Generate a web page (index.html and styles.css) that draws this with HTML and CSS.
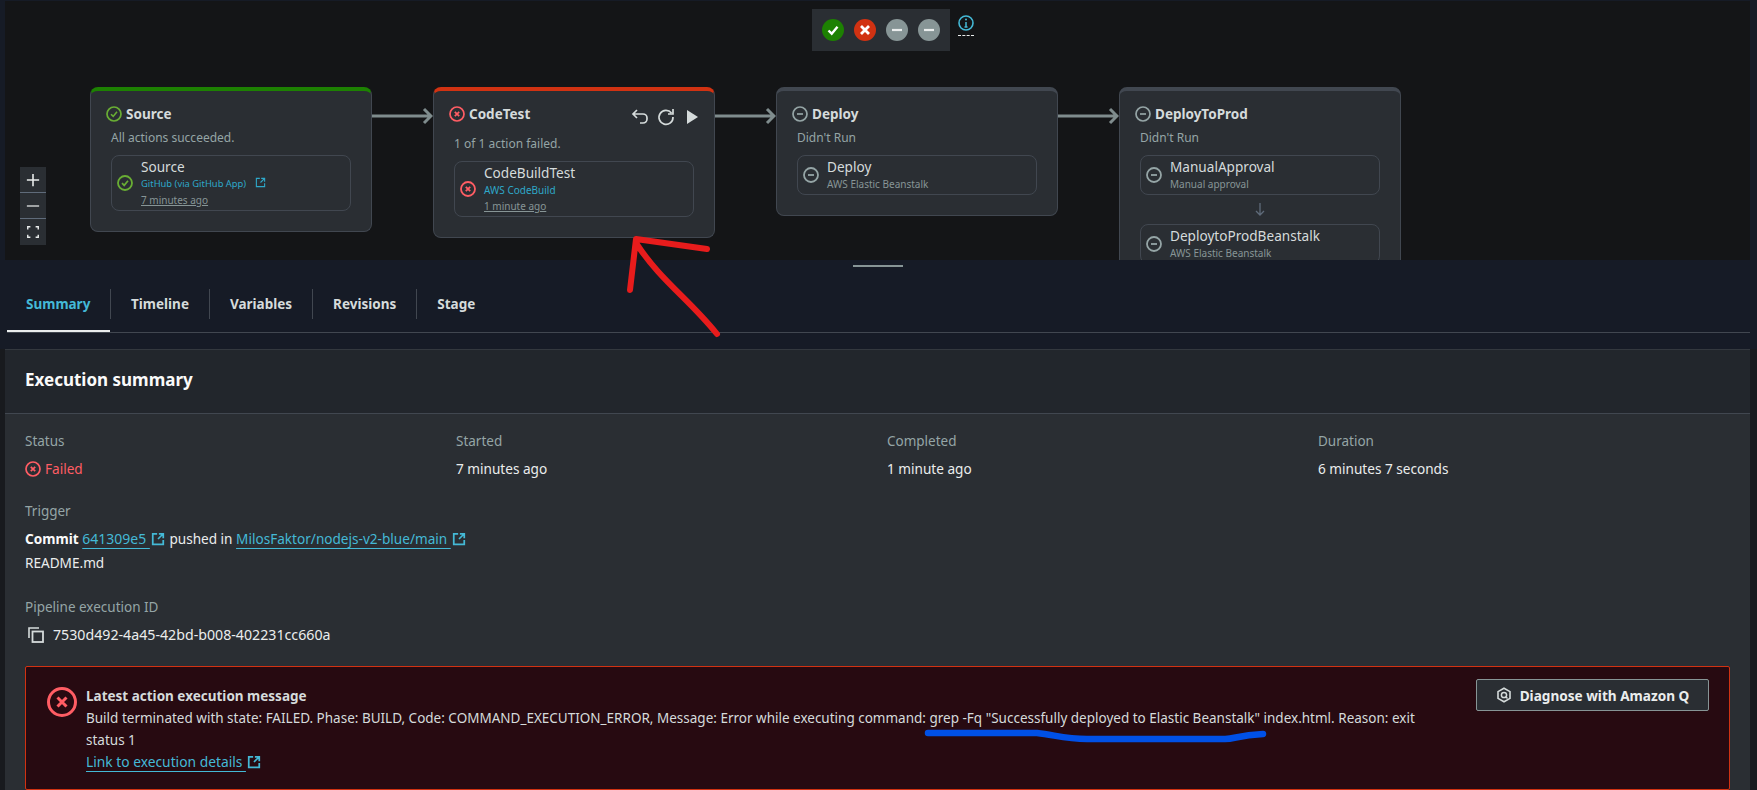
FILE: index.html
```html
<!DOCTYPE html>
<html lang="en">
<head>
  <meta charset="UTF-8" />
  <title>Pipeline execution</title>
  <link rel="stylesheet" href="styles.css">
</head>
<body>
  <div class="diagram">
    <div class="legend">
      <div class="legend-box">
        <svg class="dot" viewBox="0 0 22 22"><circle cx="11" cy="11" r="11" fill="#1d8102"/><path d="M6.5 11.5l3.2 3.2 5.8-7" fill="none" stroke="#fff" stroke-width="2.4"/></svg>
        <svg class="dot" viewBox="0 0 22 22"><circle cx="11" cy="11" r="11" fill="#d13212"/><path d="M7 7l8 8M15 7l-8 8" fill="none" stroke="#fff" stroke-width="2.8"/></svg>
        <svg class="dot" viewBox="0 0 22 22"><circle cx="11" cy="11" r="11" fill="#879596"/><path d="M6 11h10" stroke="#eaeded" stroke-width="2.2"/></svg>
        <svg class="dot" viewBox="0 0 22 22"><circle cx="11" cy="11" r="11" fill="#879596"/><path d="M6 11h10" stroke="#eaeded" stroke-width="2.2"/></svg>
      </div>
      <div class="legend-info">
        <svg viewBox="0 0 16 16" width="16" height="16"><circle cx="8" cy="8" r="7" fill="none" stroke="#44b9d6" stroke-width="1.6"/><path d="M8 7v5M6.5 12h3" stroke="#44b9d6" stroke-width="1.5" fill="none"/><circle cx="8" cy="4.6" r="1" fill="#44b9d6"/></svg>
      </div>
    </div>

    <div class="zoom-ctl">
      <div class="zoom-btn"><svg viewBox="0 0 16 16" width="14" height="14"><path d="M8 1v14M1 8h14" stroke="#eaeded" stroke-width="1.8"/></svg></div>
      <div class="zoom-btn"><svg viewBox="0 0 16 16" width="14" height="14"><path d="M1 8h14" stroke="#eaeded" stroke-width="1.4"/></svg></div>
      <div class="zoom-btn"><svg viewBox="0 0 16 16" width="14" height="14"><path d="M2 5V2h3M11 2h3v3M14 11v3h-3M5 14H2v-3" fill="none" stroke="#eaeded" stroke-width="1.6"/></svg></div>
    </div>

    <div class="stages">
      <div class="stage stage-ok">
        <div class="stage-head">
          <svg class="ic" viewBox="0 0 16 16"><circle cx="8" cy="8" r="7" fill="none" stroke="#69ae34" stroke-width="1.7"/><path d="M5 8.2l2.2 2.2 3.8-4.6" fill="none" stroke="#69ae34" stroke-width="1.6"/></svg>
          <span>Source</span>
        </div>
        <div class="stage-sub">All actions succeeded.</div>
        <div class="action">
          <svg class="ic-lg" viewBox="0 0 16 16"><circle cx="8" cy="8" r="7" fill="none" stroke="#69ae34" stroke-width="1.8"/><path d="M5 8.2l2.2 2.2 3.8-4.6" fill="none" stroke="#69ae34" stroke-width="1.7"/></svg>
          <div class="action-txt">
            <div class="action-name">Source</div>
            <div class="action-prov link tight">GitHub (via GitHub App) <svg class="ext-sm" viewBox="0 0 16 16"><path d="M7 2H2v12h12V9M9 2h5v5M14 2L8 8" fill="none" stroke="#2ea8c9" stroke-width="1.6"/></svg></div>
            <div class="action-time">7 minutes ago</div>
          </div>
        </div>
      </div>

      <svg class="arrow" viewBox="0 0 61 18"><path d="M0 9h59M52 2l7 7-7 7" fill="none" stroke="#7f8c8d" stroke-width="3"/></svg>

      <div class="stage stage-fail">
        <div class="stage-head stage-head-tall">
          <svg class="ic" viewBox="0 0 16 16"><circle cx="8" cy="8" r="7" fill="none" stroke="#ff5d64" stroke-width="1.7"/><path d="M5.8 5.8l4.4 4.4M10.2 5.8l-4.4 4.4" stroke="#ff5d64" stroke-width="1.7"/></svg>
          <span>CodeTest</span>
          <div class="stage-btns">
            <svg viewBox="0 0 18 18" width="18" height="18"><path d="M6 2L2 6l4 4M2 6h10a4 4 0 0 1 4 4v1a4 4 0 0 1-4 4H9" fill="none" stroke="#d5dbdb" stroke-width="1.7"/></svg>
            <svg viewBox="0 0 18 18" width="18" height="18"><path d="M14.5 5A7 7 0 1 0 16 9M16 1v5h-5" fill="none" stroke="#d5dbdb" stroke-width="1.7"/></svg>
            <svg viewBox="0 0 18 18" width="18" height="18"><path d="M4 2l11 7-11 7z" fill="#d5dbdb"/></svg>
          </div>
        </div>
        <div class="stage-sub">1 of 1 action failed.</div>
        <div class="action">
          <svg class="ic-lg" viewBox="0 0 16 16"><circle cx="8" cy="8" r="7" fill="none" stroke="#ff5d64" stroke-width="1.8"/><path d="M5.8 5.8l4.4 4.4M10.2 5.8l-4.4 4.4" stroke="#ff5d64" stroke-width="1.8"/></svg>
          <div class="action-txt">
            <div class="action-name">CodeBuildTest</div>
            <div class="action-prov link">AWS CodeBuild</div>
            <div class="action-time">1 minute ago</div>
          </div>
        </div>
      </div>

      <svg class="arrow" viewBox="0 0 61 18"><path d="M0 9h59M52 2l7 7-7 7" fill="none" stroke="#7f8c8d" stroke-width="3"/></svg>

      <div class="stage stage-none">
        <div class="stage-head">
          <svg class="ic" viewBox="0 0 16 16"><circle cx="8" cy="8" r="7" fill="none" stroke="#95a5a6" stroke-width="1.7"/><path d="M5 8h6" stroke="#95a5a6" stroke-width="1.7"/></svg>
          <span>Deploy</span>
        </div>
        <div class="stage-sub">Didn't Run</div>
        <div class="action">
          <svg class="ic-lg" viewBox="0 0 16 16"><circle cx="8" cy="8" r="7" fill="none" stroke="#95a5a6" stroke-width="1.8"/><path d="M5 8h6" stroke="#95a5a6" stroke-width="1.8"/></svg>
          <div class="action-txt">
            <div class="action-name">Deploy</div>
            <div class="action-prov">AWS Elastic Beanstalk</div>
          </div>
        </div>
      </div>

      <svg class="arrow" viewBox="0 0 61 18"><path d="M0 9h59M52 2l7 7-7 7" fill="none" stroke="#7f8c8d" stroke-width="3"/></svg>

      <div class="stage stage-none">
        <div class="stage-head">
          <svg class="ic" viewBox="0 0 16 16"><circle cx="8" cy="8" r="7" fill="none" stroke="#95a5a6" stroke-width="1.7"/><path d="M5 8h6" stroke="#95a5a6" stroke-width="1.7"/></svg>
          <span>DeployToProd</span>
        </div>
        <div class="stage-sub">Didn't Run</div>
        <div class="action">
          <svg class="ic-lg" viewBox="0 0 16 16"><circle cx="8" cy="8" r="7" fill="none" stroke="#95a5a6" stroke-width="1.8"/><path d="M5 8h6" stroke="#95a5a6" stroke-width="1.8"/></svg>
          <div class="action-txt">
            <div class="action-name">ManualApproval</div>
            <div class="action-prov">Manual approval</div>
          </div>
        </div>
        <svg class="down" viewBox="0 0 12 14" width="12" height="14"><path d="M6 1v12M2 9l4 4 4-4" fill="none" stroke="#5f6b7a" stroke-width="1.3"/></svg>
        <div class="action">
          <svg class="ic-lg" viewBox="0 0 16 16"><circle cx="8" cy="8" r="7" fill="none" stroke="#95a5a6" stroke-width="1.8"/><path d="M5 8h6" stroke="#95a5a6" stroke-width="1.8"/></svg>
          <div class="action-txt">
            <div class="action-name">DeploytoProdBeanstalk</div>
            <div class="action-prov">AWS Elastic Beanstalk</div>
          </div>
        </div>
      </div>
    </div>
  </div>

  <div class="handle"></div>

  <div class="tabs">
    <div class="tab tab-active">Summary</div>
    <div class="tab">Timeline</div>
    <div class="tab">Variables</div>
    <div class="tab">Revisions</div>
    <div class="tab">Stage</div>
  </div>

  <div class="panel">
    <div class="panel-head">Execution summary</div>
    <div class="panel-body">
      <div class="cols">
        <div>
          <div class="lbl">Status</div>
          <div class="val val-fail"><svg class="ic" viewBox="0 0 16 16"><circle cx="8" cy="8" r="7" fill="none" stroke="#ff5d64" stroke-width="1.7"/><path d="M5.8 5.8l4.4 4.4M10.2 5.8l-4.4 4.4" stroke="#ff5d64" stroke-width="1.7"/></svg> Failed</div>
        </div>
        <div>
          <div class="lbl">Started</div>
          <div class="val">7 minutes ago</div>
        </div>
        <div>
          <div class="lbl">Completed</div>
          <div class="val">1 minute ago</div>
        </div>
        <div>
          <div class="lbl">Duration</div>
          <div class="val">6 minutes 7 seconds</div>
        </div>
      </div>

      <div class="lbl lbl-trigger">Trigger</div>
      <div class="val"><b>Commit</b> <a class="lnk lnk-sha">641309e5&nbsp;</a><svg class="ext" viewBox="0 0 16 16"><path d="M7 2H2v12h12V9M9 2h5v5M14 2L8 8" fill="none" stroke="#44b9d6" stroke-width="2"/></svg> pushed in <a class="lnk">MilosFaktor/nodejs-v2-blue/main&nbsp;</a><svg class="ext" viewBox="0 0 16 16"><path d="M7 2H2v12h12V9M9 2h5v5M14 2L8 8" fill="none" stroke="#44b9d6" stroke-width="2"/></svg></div>
      <div class="val val-readme">README.md</div>

      <div class="lbl lbl-id">Pipeline execution ID</div>
      <div class="val val-id">
        <svg class="copy" viewBox="0 0 16 16"><path d="M1 11V1h10" fill="none" stroke="#d5dbdb" stroke-width="1.6"/><rect x="4.5" y="4.5" width="10.5" height="10.5" fill="none" stroke="#d5dbdb" stroke-width="1.8"/></svg>
        7530d492-4a45-42bd-b008-402231cc660a
      </div>

      <div class="alert">
        <svg class="alert-ic" viewBox="0 0 32 32"><circle cx="16" cy="16" r="13.5" fill="none" stroke="#ff5d64" stroke-width="3"/><path d="M11.5 11.5l9 9M20.5 11.5l-9 9" stroke="#ff5d64" stroke-width="3"/></svg>
        <div class="alert-txt">
          <div class="alert-title">Latest action execution message</div>
          <div>Build terminated with state: FAILED. Phase: BUILD, Code: COMMAND_EXECUTION_ERROR, Message: Error while executing command: grep -Fq "Successfully deployed to Elastic Beanstalk" index.html. Reason: exit status 1</div>
          <div><a class="lnk">Link to execution details&nbsp;</a><svg class="ext" viewBox="0 0 16 16"><path d="M7 2H2v12h12V9M9 2h5v5M14 2L8 8" fill="none" stroke="#44b9d6" stroke-width="2"/></svg></div>
        </div>
        <button class="q-btn"><svg viewBox="0 0 16 16" width="16" height="16"><path d="M8 1.2l6 3.4v6.8l-6 3.4-6-3.4V4.6z" fill="none" stroke="#d5dbdb" stroke-width="1.6"/><circle cx="8" cy="8" r="2.6" fill="none" stroke="#d5dbdb" stroke-width="1.5"/><path d="M9.5 9.5l2 2" stroke="#d5dbdb" stroke-width="1.5"/></svg>Diagnose with Amazon Q</button>
      </div>
    </div>
  </div>

  <svg class="marks" viewBox="0 0 1757 790" width="1757" height="790">
    <path d="M707 249L636 239L630 290M636 243C660 280 690 300 717 334" fill="none" stroke="#e81c1c" stroke-width="6" stroke-linecap="round" stroke-linejoin="round"/>
    <path d="M928 733L1037 733C1055 735 1065 739 1087 739L1225 739C1235 739 1238 735 1263 734" fill="none" stroke="#0050e6" stroke-width="6.5" stroke-linecap="round"/>
  </svg>
</body>
</html>
```

FILE: styles.css
```css
* { box-sizing: border-box; }
html, body { margin: 0; height: 100%; }
body { position: relative; height: 790px; overflow: hidden; background: #161b26; color: #d5dbdb; font-family: "Noto Sans", Arial, sans-serif; font-size: 14px; line-height: 20px; }

.diagram { position: relative; height: 259px; margin: 1px 7px 0 5px; background: #141517; overflow: hidden; }
.legend { position: absolute; top: 8px; left: 807px; display: flex; gap: 8px; }
.legend-box { display: flex; gap: 10px; align-items: center; height: 42px; padding: 0 10px; background: #2a2e33; }
.dot { width: 22px; height: 22px; }
.legend-info { height: 27px; padding-top: 6px; border-bottom: 1px dashed #eaeded; line-height: 0; }

.zoom-ctl { position: absolute; top: 166px; left: 15px; width: 26px; background: #2a2e33; }
.zoom-btn { height: 26px; display: flex; align-items: center; justify-content: center; border-bottom: 1px solid #5f6b7a; }
.zoom-btn:last-child { border-bottom: 0; }

.stages { display: flex; align-items: flex-start; padding: 86px 0 0 85px; }
.arrow { width: 61px; height: 18px; margin-top: 20px; flex: none; }
.stage { flex: none; width: 282px; padding: 0 20px 20px; background: #2a2e33; border: 1px solid #414750; border-top-width: 4px; border-radius: 8px; }
.stage-ok { border-top-color: #1d8102; }
.stage-fail { border-top-color: #d13212; }
.stage-none { border-top-color: #414750; }

.stage-head { display: flex; align-items: center; gap: 4px; height: 20px; margin: 13px 0 0 -5px; font-weight: 700; font-size: 13.5px; }
.stage-head-tall { height: 26px; align-items: flex-start; }
.stage-head-tall .ic { margin-top: 2px; }
.stage-btns { display: flex; gap: 8px; margin-left: auto; margin-right: -7px; padding-top: 4px; }
.ic { width: 16px; height: 16px; flex: none; }
.stage-sub { margin-top: 6px; font-size: 12px; line-height: 16px; color: #95a5a6; }
.action { display: flex; align-items: center; gap: 8px; margin-top: 9px; padding: 2px 5px; border: 1px solid #414750; border-radius: 8px; }
.ic-lg { width: 16px; height: 16px; flex: none; }
.action-name { line-height: 18px; font-size: 13.6px; }
.action-prov { font-size: 10px; line-height: 16px; color: #879596; }
.action-prov.link { color: #2ea8c9; }
.action-prov.tight { font-size: 9.4px; }
.action-time { font-size: 10px; line-height: 16px; color: #879596; text-decoration: underline; }
.ext-sm { width: 11px; height: 11px; margin-left: 6px; vertical-align: -1px; }
.down { display: block; margin: 7px auto 0; }
.down + .action { margin-top: 8px; }

.handle { width: 50px; height: 2px; margin: 5px 0 0 853px; background: #879596; }

.tabs { display: flex; height: 66px; margin: 0 7px 0 7px; padding-top: 22px; border-bottom: 1px solid #414750; }
.tab { height: 30px; padding: 0 20px; line-height: 30px; font-weight: 700; font-size: 13.5px; border-right: 1px solid #414750; color: #d5dbdb; }
.tab:last-child { border-right: 0; }
.tab-active { position: relative; color: #44b9d6; width: 104px; padding-left: 19px; }
.tab-active::after { content: ""; position: absolute; left: 0; right: 0; top: 41px; height: 2px; background: #eaeded; }

.panel { margin: 16px 7px 0 5px; height: 441px; background: #2a2e33; border-top: 1px solid #33383e; box-shadow: 7px 0 0 #181a1e, -5px 0 0 #181a1e; }
.panel-head { height: 64px; padding: 19px 20px; line-height: 22px; font-size: 17px; font-weight: 700; color: #fafafa; background: #22262c; border-bottom: 1px solid #414750; }
.panel-body { padding: 17px 20px; }
.cols { display: grid; grid-template-columns: repeat(4, 431px); }
.lbl { color: #95a5a6; font-size: 13.5px; }
.val { margin-top: 8px; color: #eaeded; font-size: 13.6px; }
.val b { color: #fafafa; }
.val-fail { display: flex; align-items: center; gap: 4px; color: #ff5d64; }
.lbl-trigger { margin-top: 22px; }
.val-readme { margin-top: 4px; }
.lbl-id { margin-top: 24px; }
.val-id { display: flex; align-items: center; gap: 9px; font-size: 14.2px; }
.copy { width: 16px; height: 16px; margin-left: 3px; }
.lnk { color: #44b9d6; text-decoration: underline; text-underline-offset: 4px; }
.lnk-sha { font-size: 14px; }
.ext { width: 14px; height: 14px; margin: 0 1px; vertical-align: -2px; }

.alert { display: flex; gap: 8px; margin-top: 21px; padding: 12px 20px 0 20px; height: 124px; background: #270a11; border: 1px solid #d13212; border-radius: 2px; }
.alert-ic { width: 32px; height: 32px; flex: none; margin-top: 7px; }
.alert-txt { flex: 1; margin: 6px 22px 0 0; font-size: 13.5px; line-height: 22px; }
.alert-txt .lnk { font-size: 13.8px; }
.alert-title { font-weight: 700; }
.q-btn { flex: none; display: flex; align-items: center; justify-content: center; gap: 8px; width: 233px; height: 32px; padding: 0; background: #2a2e33; border: 1px solid #879596; border-radius: 2px; color: #eaeded; font: 700 13.6px "Noto Sans", Arial, sans-serif; }

.marks { position: absolute; top: 0; left: 0; pointer-events: none; }
```
